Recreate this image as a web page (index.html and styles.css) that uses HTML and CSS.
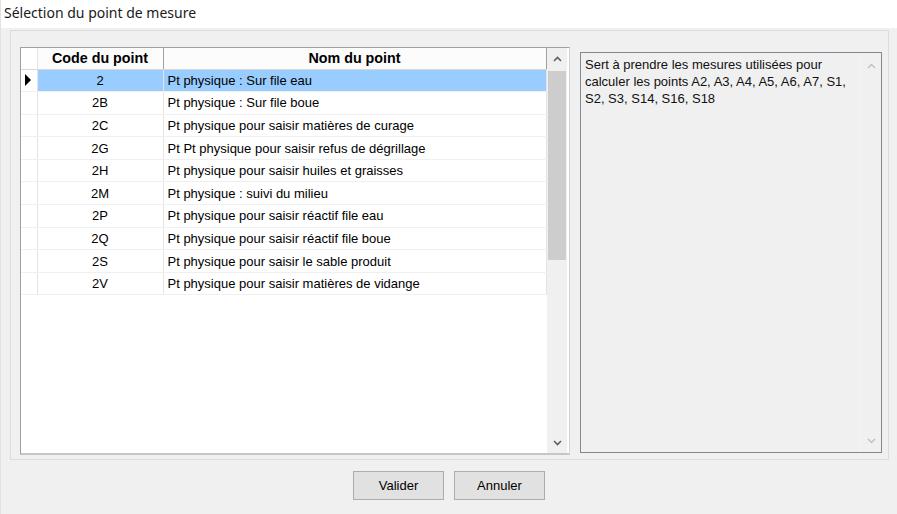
FILE: index.html
```html
<!DOCTYPE html>
<html lang="fr">
<head>
  <meta charset="UTF-8" />
  <title>Sélection du point de mesure</title>
  <link rel="stylesheet" href="styles.css">
</head>
<body>

<div class="fenetre">
  <div class="titre">Sélection du point de mesure</div>

  <div class="cadre">
    <div class="grille">
      <div class="grille-corps">
        <table class="tableau">
          <thead>
            <tr>
              <th class="selecteur"></th>
              <th class="col-code">Code du point</th>
              <th class="col-nom">Nom du point</th>
            </tr>
          </thead>
          <tbody>
            <tr class="actif">
              <td class="selecteur"><span class="fleche"></span></td>
              <td class="col-code">2</td>
              <td class="col-nom">Pt physique : Sur file eau</td>
            </tr>
            <tr>
              <td class="selecteur"></td>
              <td class="col-code">2B</td>
              <td class="col-nom">Pt physique : Sur file boue</td>
            </tr>
            <tr>
              <td class="selecteur"></td>
              <td class="col-code">2C</td>
              <td class="col-nom">Pt physique pour saisir matières de curage</td>
            </tr>
            <tr>
              <td class="selecteur"></td>
              <td class="col-code">2G</td>
              <td class="col-nom">Pt Pt physique pour saisir refus de dégrillage</td>
            </tr>
            <tr>
              <td class="selecteur"></td>
              <td class="col-code">2H</td>
              <td class="col-nom">Pt physique pour saisir huiles et graisses</td>
            </tr>
            <tr>
              <td class="selecteur"></td>
              <td class="col-code">2M</td>
              <td class="col-nom">Pt physique : suivi du milieu</td>
            </tr>
            <tr>
              <td class="selecteur"></td>
              <td class="col-code">2P</td>
              <td class="col-nom">Pt physique pour saisir réactif file eau</td>
            </tr>
            <tr>
              <td class="selecteur"></td>
              <td class="col-code">2Q</td>
              <td class="col-nom">Pt physique pour saisir réactif file boue</td>
            </tr>
            <tr>
              <td class="selecteur"></td>
              <td class="col-code">2S</td>
              <td class="col-nom">Pt physique pour saisir le sable produit</td>
            </tr>
            <tr>
              <td class="selecteur"></td>
              <td class="col-code">2V</td>
              <td class="col-nom">Pt physique pour saisir matières de vidange</td>
            </tr>
          </tbody>
        </table>
      </div>
      <div class="defilement">
        <div class="fleche-haut">
          <svg width="9" height="6" viewBox="0 0 9 6"><path d="M1 5 L4.5 1.5 L8 5" fill="none" stroke="#606060" stroke-width="1.6"/></svg>
        </div>
        <div class="piste">
          <div class="curseur"></div>
        </div>
        <div class="fleche-bas">
          <svg width="9" height="6" viewBox="0 0 9 6"><path d="M1 1 L4.5 4.5 L8 1" fill="none" stroke="#606060" stroke-width="1.6"/></svg>
        </div>
      </div>
    </div>

    <div class="description">
      <div class="description-texte">Sert à prendre les mesures utilisées pour calculer les points A2, A3, A4, A5, A6, A7, S1, S2, S3, S14, S16, S18</div>
      <div class="defilement-inactif">
        <svg width="9" height="6" viewBox="0 0 9 6"><path d="M1 5 L4.5 1.5 L8 5" fill="none" stroke="#c0c0c0" stroke-width="1.4"/></svg>
        <svg width="9" height="6" viewBox="0 0 9 6"><path d="M1 1 L4.5 4.5 L8 1" fill="none" stroke="#c0c0c0" stroke-width="1.4"/></svg>
      </div>
    </div>
  </div>

  <div class="boutons">
    <button class="bouton">Valider</button>
    <button class="bouton">Annuler</button>
  </div>
</div>

</body>
</html>
```

FILE: styles.css
```css
* {
  box-sizing: border-box;
}

body {
  margin: 0;
  font-family: "Liberation Sans", Arial, sans-serif;
  font-size: 13px;
  color: #000;
  background-color: #f0f0f0;
}

.fenetre {
  width: 897px;
  height: 514px;
  background-color: #f0f0f0;
  border-left: 1px solid #e2e2e2;
}

.titre {
  height: 28px;
  padding: 3px 0 0 3px;
  background-color: #fff;
  font-family: "Noto Sans", "Open Sans", sans-serif;
  font-size: 14px;
  color: #1a1a1a;
}

.cadre {
  display: flex;
  align-items: flex-start;
  gap: 10px;
  width: 879px;
  height: 430px;
  margin: 2px 0 0 9px;
  padding: 16px 0 0 9px;
  border: 1px solid #dcdcdc;
}

/* grille des points */

.grille {
  display: flex;
  width: 550px;
  height: 408px;
  background-color: #fff;
  border: 1px solid #a0a0a0;
  border-bottom: 2px solid #c5c5ca;
  border-right-color: #d4d4d4;
}

.grille-corps {
  flex: 1;
  background-color: #fff;
}

.tableau {
  border-collapse: collapse;
  table-layout: fixed;
  width: 525px;
}

.tableau th {
  height: 21px;
  padding: 0;
  font-size: 14.3px;
  font-weight: bold;
  text-align: center;
  background-color: #fcfcfc;
  border-right: 1px solid #a0a0a0;
  border-bottom: 1px solid #d8d8d8;
}

.tableau th.selecteur {
  border-right: 1px solid #e6e6e6;
  background-color: #fff;
}

.tableau td {
  height: 22.6px;
  padding: 0;
  border-bottom: 1px solid #f0f0f0;
  border-right: 1px solid #e4e4e4;
  white-space: nowrap;
  overflow: hidden;
}

.selecteur {
  width: 16px;
}

.col-code {
  width: 126px;
  text-align: center;
}

.col-nom {
  width: 383px;
}

.tableau td.col-nom {
  padding-left: 4px;
}

.tableau td.selecteur {
  border-right: 1px solid #e4e4e4;
}

.tableau tr.actif .col-code,
.tableau tr.actif .col-nom {
  background-color: #99ccff;
}

.fleche {
  display: block;
  width: 0;
  height: 0;
  margin-left: 4px;
  border-top: 6px solid transparent;
  border-bottom: 6px solid transparent;
  border-left: 6px solid #000;
}

/* barre de défilement */

.defilement {
  display: flex;
  flex-direction: column;
  width: 20px;
  margin-right: 2px;
  background-color: #f0f0f0;
}

.fleche-haut,
.fleche-bas {
  height: 21px;
  display: flex;
  align-items: center;
  justify-content: center;
}

.piste {
  flex: 1;
  padding: 2px 1px 0;
}

.curseur {
  height: 189px;
  background-color: #cdcdcd;
}

/* zone de description */

.description {
  display: flex;
  width: 302px;
  height: 401px;
  margin-top: 5px;
  border: 1px solid #828790;
  background-color: #f0f0f0;
}

.description-texte {
  flex: 1;
  padding: 3px 4px;
  line-height: 17px;
  color: #111;
}

.defilement-inactif {
  width: 21px;
  display: flex;
  flex-direction: column;
  justify-content: space-between;
  align-items: center;
  padding: 10px 0 8px;
  border-left: 1px solid #f4f4f4;
}

/* boutons */

.boutons {
  display: flex;
  justify-content: center;
  gap: 10px;
  margin-top: 11px;
}

.bouton {
  width: 91px;
  height: 29px;
  font-family: "Liberation Sans", Arial, sans-serif;
  font-size: 13px;
  color: #000;
  background-color: #e1e1e1;
  border: 1px solid #adadad;
  padding: 0;
}
```
